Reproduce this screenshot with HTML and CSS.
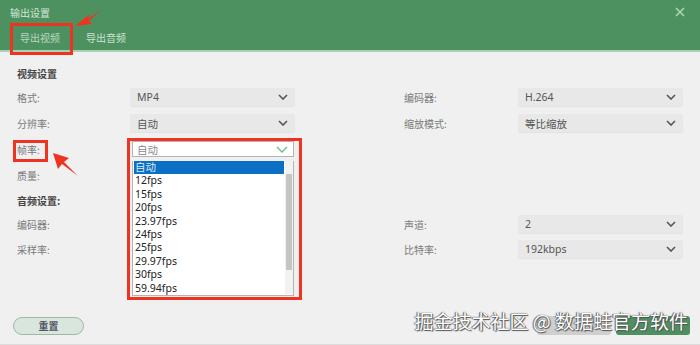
FILE: index.html
```html
<!DOCTYPE html>
<html lang="zh-CN">
<head>
    <meta charset="UTF-8">
    <title>输出设置</title>
    <link rel="stylesheet" href="styles.css">
</head>
<body>
<div class="dialog">

    <header class="titlebar">
        <div class="title-row">
            <span class="title">输出设置</span>
            <svg class="close" width="10" height="10" viewBox="0 0 10 10"><path d="M1 1L9 9M9 1L1 9" stroke="#a6d8b1" stroke-width="1.6"/></svg>
        </div>
        <nav class="tabs">
            <span class="tab active">导出视频</span>
            <span class="tab">导出音频</span>
        </nav>
    </header>

    <main class="form">
        <div class="heading">视频设置</div>

        <label class="label">格式:</label>
        <div class="select">MP4<svg class="chev" width="10" height="6" viewBox="0 0 10 6"><path d="M1 1L5 5L9 1" fill="none" stroke="#555" stroke-width="1.6"/></svg></div>
        <label class="label right">编码器:</label>
        <div class="select">H.264<svg class="chev" width="10" height="6" viewBox="0 0 10 6"><path d="M1 1L5 5L9 1" fill="none" stroke="#555" stroke-width="1.6"/></svg></div>

        <label class="label">分辨率:</label>
        <div class="select">自动<svg class="chev" width="10" height="6" viewBox="0 0 10 6"><path d="M1 1L5 5L9 1" fill="none" stroke="#555" stroke-width="1.6"/></svg></div>
        <label class="label right">缩放模式:</label>
        <div class="select">等比缩放<svg class="chev" width="10" height="6" viewBox="0 0 10 6"><path d="M1 1L5 5L9 1" fill="none" stroke="#555" stroke-width="1.6"/></svg></div>

        <label class="label">帧率:</label>
        <div class="dropdown">
            <div class="select open">自动<svg class="chev" width="12" height="7" viewBox="0 0 12 7"><path d="M1 1L6 6L11 1" fill="none" stroke="#6dbb7f" stroke-width="1.3"/></svg></div>
            <ul class="options">
                <li class="selected">自动</li>
                <li>12fps</li>
                <li>15fps</li>
                <li>20fps</li>
                <li>23.97fps</li>
                <li>24fps</li>
                <li>25fps</li>
                <li>29.97fps</li>
                <li>30fps</li>
                <li>59.94fps</li>
            </ul>
            <div class="scrollbar"><div class="thumb"></div></div>
        </div>

        <label class="label">质量:</label>

        <div class="heading">音频设置:</div>

        <label class="label">编码器:</label>
        <label class="label right">声道:</label>
        <div class="select">2<svg class="chev" width="10" height="6" viewBox="0 0 10 6"><path d="M1 1L5 5L9 1" fill="none" stroke="#555" stroke-width="1.6"/></svg></div>

        <label class="label">采样率:</label>
        <label class="label right">比特率:</label>
        <div class="select">192kbps<svg class="chev" width="10" height="6" viewBox="0 0 10 6"><path d="M1 1L5 5L9 1" fill="none" stroke="#555" stroke-width="1.6"/></svg></div>
    </main>

    <footer class="actions">
        <button class="btn-reset">重置</button>
        <div class="buttons-right">
            <button class="btn-grey"></button>
            <button class="btn-green"></button>
        </div>
    </footer>

    <!-- annotation overlay -->
    <div class="mark mark-tab"></div>
    <div class="mark mark-label"></div>
    <div class="mark mark-list"></div>
    <svg class="arrows" width="700" height="345" viewBox="0 0 700 345">
        <polygon points="75,26 90,14 88,19 101,10 89,21 92,24" fill="#ef3322"/>
        <polygon points="53,153 69,158 64,162 78,176 62,164 58,169" fill="#ef3322"/>
    </svg>

    <div class="watermark">掘金技术社区 @ 数据蛙官方软件</div>
</div>
</body>
</html>
```

FILE: styles.css
```css
body {
    margin: 0;
    background: #f0f0f0;
    font-family: "Noto Sans CJK SC", "Noto Sans", sans-serif;
}

.dialog {
    position: relative;
    width: 700px;
    height: 345px;
    display: flex;
    flex-direction: column;
    overflow: hidden;
    border-bottom: 1px solid #dcdcdc;
    box-sizing: border-box;
}

/* Header */
.titlebar {
    background: #4e9160;
    border-bottom: 2px solid #a8d3b2;
    height: 52px;
    box-sizing: border-box;
}

.title-row {
    height: 24px;
    display: flex;
    align-items: center;
    justify-content: space-between;
    padding: 0 15px 0 10px;
}

.title {
    font-size: 10px;
    color: #d3e6d8;
}

.tabs {
    display: flex;
    gap: 26px;
    height: 26px;
    align-items: center;
    padding-left: 20px;
}

.tab {
    font-size: 10px;
    color: #cbe2d1;
}

.tab.active {
    color: #b9d6c0;
}

/* Form */
.form {
    display: grid;
    grid-template-columns: 113px 165px 109px 114px 165px;
    grid-template-rows: 22px 26px 26px 26px 26px 24px 24px 26px;
    align-items: center;
    padding: 10px 0 0 17px;
}

.heading {
    grid-column: 1 / span 2;
    font-size: 10px;
    font-weight: bold;
    color: #444;
}

.label {
    grid-column: 1;
    font-size: 10px;
    color: #7a7a7a;
}

.label.right {
    grid-column: 4;
}

.select {
    height: 18px;
    background: #e8e8e8;
    border-radius: 2px;
    box-shadow: 0 1px 1px rgba(0, 0, 0, 0.06);
    display: flex;
    align-items: center;
    justify-content: space-between;
    padding: 0 7px;
    font-family: "Noto Sans", "Noto Sans CJK SC", sans-serif;
    font-size: 10.5px;
    color: #555;
}

.dropdown {
    position: relative;
    padding-left: 2px;
    padding-right: 1px;
}

.select.open {
    height: 14px;
    background: #fff;
    border: 1px solid #b4b4b4;
    border-radius: 0;
    box-shadow: none;
    padding: 0 5px 0 4px;
    color: #888;
}

.options {
    position: absolute;
    top: 20px;
    left: 2px;
    right: 1px;
    margin: 0;
    padding: 0 0 0 1px;
    list-style: none;
    background: #fff;
    border: 1px solid #b4b4b4;
    border-top: none;
    height: 134px;
    font-family: "Noto Sans", "Noto Sans CJK SC", sans-serif;
    font-size: 10.5px;
    color: #222;
}

.options li {
    display: block;
    height: 13.4px;
    line-height: 13.4px;
    overflow: hidden;
    width: 149px;
    padding-left: 1px;
}

.options li.selected {
    background: #0b6fc4;
    color: #dbe9f7;
}

.scrollbar {
    position: absolute;
    top: 20px;
    right: 2px;
    width: 8px;
    height: 133px;
    background: #f2f2f2;
}

.thumb {
    margin: 13px 1px 0;
    height: 96px;
    background: #c5c5c5;
}

/* Footer */
.actions {
    margin-top: auto;
    display: flex;
    justify-content: space-between;
    align-items: center;
    padding: 0 10px 9px 13px;
}

.btn-reset {
    width: 71px;
    height: 18px;
    border-radius: 9px;
    border: 1px solid #9fb8a6;
    background: #d9e6dd;
    font-family: "Noto Sans CJK SC", sans-serif;
    font-size: 10px;
    font-weight: bold;
    color: #556;
    padding: 0;
}

.buttons-right {
    display: flex;
    gap: 5px;
}

.btn-grey,
.btn-green {
    width: 74px;
    height: 19px;
    border: none;
    border-radius: 3px;
}

.btn-grey {
    background: #cfcfcf;
}

.btn-green {
    background: #4e9160;
}

/* Annotations */
.mark {
    position: absolute;
    border: 3px solid #ef3322;
    box-sizing: border-box;
}

.mark-tab {
    left: 10px;
    top: 23px;
    width: 63px;
    height: 32px;
}

.mark-label {
    left: 13px;
    top: 140px;
    width: 35px;
    height: 22px;
}

.mark-list {
    left: 127px;
    top: 138px;
    width: 175px;
    height: 162px;
}

.arrows {
    position: absolute;
    left: 0;
    top: 0;
}

.watermark {
    position: absolute;
    right: 12px;
    bottom: 10px;
    font-size: 19px;
    color: #fff;
    text-shadow: 0 0 1px #444, 1px 1px 1px #555, -1px 0 1px #666;
}
```
